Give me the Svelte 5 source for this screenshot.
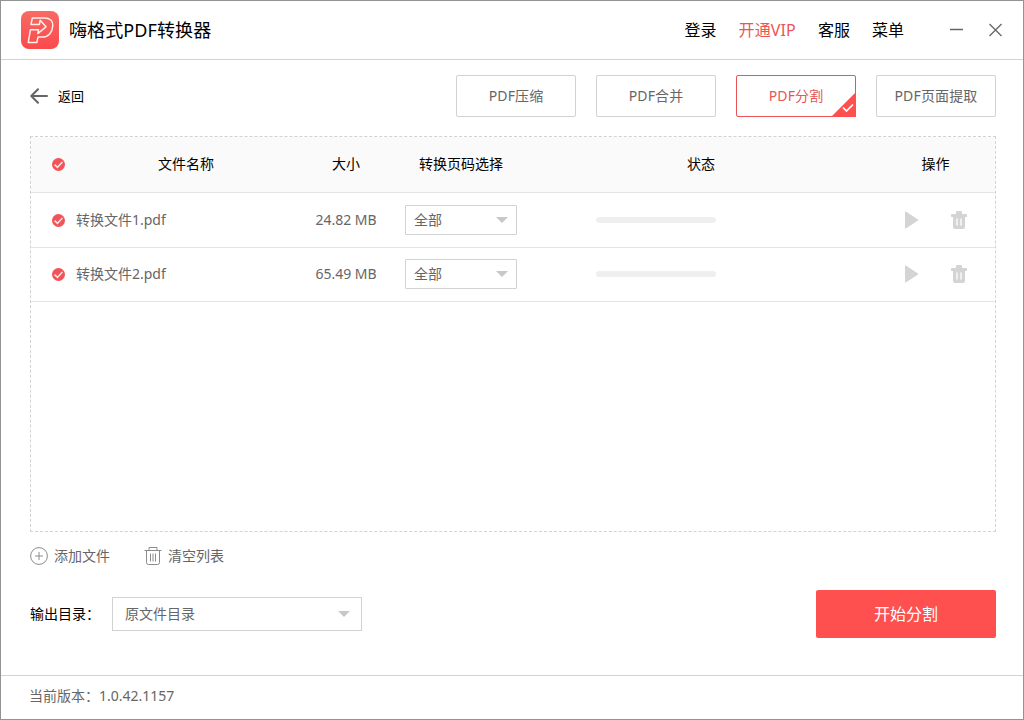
<script>
	const menu = [
		{ label: '登录' },
		{ label: '开通VIP', vip: true },
		{ label: '客服' },
		{ label: '菜单' }
	];
	const modes = ['PDF压缩', 'PDF合并', 'PDF分割', 'PDF页面提取'];
	let mode = $state('PDF分割');

	const columns = ['文件名称', '大小', '转换页码选择', '状态', '操作'];
	const files = [
		{ name: '转换文件1.pdf', size: '24.82 MB', pages: '全部', progress: 0 },
		{ name: '转换文件2.pdf', size: '65.49 MB', pages: '全部', progress: 0 }
	];
</script>

{#snippet check()}
	<svg class="check" width="13" height="13" viewBox="0 0 13 13">
		<circle cx="6.5" cy="6.5" r="6.5" fill="#f05458" />
		<path d="M2.6 6.6l2.900 2.700 4.900-5.300" fill="none" stroke="#fde3e3" stroke-width="1.600" />
	</svg>
{/snippet}

{#snippet caret()}
	<svg width="12" height="6" viewBox="0 0 12 6"><path d="M0 0h12L6 6z" fill="#c8c8c8" /></svg>
{/snippet}

<div class="window">
	<header>
		<svg class="logo" width="38" height="38" viewBox="0 0 38 38">
			<defs>
				<linearGradient id="logo-bg" x1="0" y1="0" x2="0" y2="1">
					<stop offset="0" stop-color="#f96a62" />
					<stop offset="1" stop-color="#fb4a4c" />
				</linearGradient>
			</defs>
			<rect width="38" height="38" rx="8" fill="url(#logo-bg)" />
			<path
				d="M11.300 6.900H23.500c5.500 0 8.700 3.100 8.300 7.900-.5 6.600-4.300 11.300-10.500 11.300H17l-1.200 5.500H7.200L9.400 18.800h8.100l-.7 3.800 8.200-6.800-5.800-6.600-.8 4.200H10z"
				fill="none"
				stroke="#fff"
				stroke-opacity=".9"
				stroke-width="1.500"
				stroke-linejoin="round"
			/>
		</svg>
		<h1>嗨格式PDF转换器</h1>
		<nav>
			{#each menu as item}
				<span class:vip={item.vip}>{item.label}</span>
			{/each}
		</nav>
		<svg class="controls" width="54" height="14" viewBox="0 0 54 14">
			<path d="M1 6.500h13M40.500 1l12 12M52.500 1l-12 12" fill="none" stroke="#666" stroke-width="1.300" />
		</svg>
	</header>

	<main>
		<div class="toolbar">
			<div class="back">
				<svg width="18" height="16" viewBox="0 0 18 16">
					<path
						d="M17 8H1.500M8 1.200L1.300 8 8 14.800"
						fill="none"
						stroke="#666"
						stroke-width="2"
						stroke-linecap="round"
						stroke-linejoin="round"
					/>
				</svg>
				<span>返回</span>
			</div>
			<div class="modes">
				{#each modes as m}
					<button class="mode" class:active={mode === m} onclick={() => (mode = m)}>
						{m}
						{#if mode === m}
							<svg class="corner" width="25" height="25" viewBox="0 0 25 25">
								<path d="M25 0v25H0z" fill="#ff5050" />
								<path d="M12 15.500l3.500 3.500 6.500-6.500" fill="none" stroke="#fff" stroke-width="1.700" />
							</svg>
						{/if}
					</button>
				{/each}
			</div>
		</div>

		<div class="table">
			<div class="row head">
				{@render check()}
				{#each columns as column}
					<span>{column}</span>
				{/each}
			</div>
			{#each files as file}
				<div class="row file">
					{@render check()}
					<span class="name">{file.name}</span>
					<span>{file.size}</span>
					<div class="select pages">{file.pages}{@render caret()}</div>
					<div class="progress"><div class="bar" style="width: {file.progress}%"></div></div>
					<div class="ops">
						<svg width="14" height="18" viewBox="0 0 14 18">
							<path d="M.5.8L13 9 .5 17.200z" fill="#d4d4d4" stroke="#d4d4d4" stroke-linejoin="round" />
						</svg>
						<svg width="16" height="18" viewBox="0 0 16 18">
							<path
								d="M5 1q0-1 1-1h4q1 0 1 1v2h4.200q.8 0 .8.800v1.400q0 .8-.8.800H14v10q0 2-2 2H4q-2 0-2-2V6H.8Q0 6 0 5.200V3.800Q0 3 .8 3H5z"
								fill="#d4d4d4"
							/>
							<path d="M6 7.500v7M10 7.500v7" stroke="#fff" stroke-width="1.300" />
						</svg>
					</div>
				</div>
			{/each}
		</div>

		<div class="actions">
			<div class="action add">
				<svg width="18" height="18" viewBox="0 0 18 18" fill="none" stroke="#8c8c8c">
					<circle cx="9" cy="9" r="8.400" />
					<path d="M9 5v8M5 9h8" />
				</svg>
				添加文件
			</div>
			<div class="action">
				<svg width="18" height="18" viewBox="0 0 18 18" fill="none" stroke="#8c8c8c">
					<path d="M.5 3.500h17M5 3V.5h8V3M2.500 3.500v12q0 2 2 2h9q2 0 2-2v-12M6.500 6.500v8M9 6.500v8M11.500 6.500v8" />
				</svg>
				清空列表
			</div>
		</div>

		<div class="output">
			<span class="label">输出目录：</span>
			<div class="select dir">原文件目录{@render caret()}</div>
			<button class="start">开始分割</button>
		</div>
	</main>

	<footer>当前版本：1.0.42.1157</footer>
</div>

<style>
	:global(body) {
		margin: 0;
	}

	.window {
		box-sizing: border-box;
		display: flex;
		flex-direction: column;
		width: 1024px;
		height: 720px;
		border: 1px solid #939393;
		background: #fff;
		color: #000;
		font-family: 'Noto Sans', 'Noto Sans CJK SC', sans-serif;
		font-size: 14px;
		line-height: 20px;
	}

	svg {
		display: block;
		flex: none;
	}

	button {
		padding: 0;
		font: inherit;
	}

	header {
		box-sizing: border-box;
		display: flex;
		align-items: center;
		height: 59px;
		padding: 0 20px;
		border-bottom: 1px solid #d2d2d2;
	}

	h1 {
		margin: 0 auto 0 10px;
		font-size: 18px;
		font-weight: 400;
		letter-spacing: 0.1px;
	}

	nav {
		display: flex;
		gap: 22px;
		margin-right: 45px;
		font-size: 16px;
	}

	.vip {
		color: #ee5455;
		letter-spacing: 0.15px;
	}

	main {
		flex: 1;
		padding: 15px 27px 0 29px;
	}

	.toolbar {
		display: flex;
		justify-content: space-between;
		align-items: center;
		height: 42px;
	}

	.back {
		display: flex;
		align-items: center;
		gap: 10px;
		font-size: 13px;
	}

	.modes {
		display: flex;
		gap: 20px;
	}

	.mode {
		position: relative;
		box-sizing: border-box;
		width: 120px;
		height: 42px;
		border: 1px solid #d2d2d2;
		border-radius: 2px;
		background: #fff;
		color: #666;
		letter-spacing: 0.15px;
	}

	.mode.active {
		border-color: #e85558;
		color: #e85558;
	}

	.corner {
		position: absolute;
		right: -1px;
		bottom: -1px;
	}

	.table {
		box-sizing: border-box;
		height: 396px;
		margin-top: 19px;
		border: 1px dashed #d2d2d2;
	}

	.row {
		box-sizing: border-box;
		display: grid;
		grid-template-columns: 45px 220px 100px 130px 350px 1fr;
		align-items: center;
		justify-items: center;
		height: 54px;
		padding-bottom: 1px;
		border-bottom: 1px solid #e4e4e4;
		color: #666;
	}

	.head {
		height: 56px;
		background: #fafafa;
		color: #000;
	}

	.head + .file {
		height: 55px;
		padding-top: 1px;
	}

	.check {
		justify-self: start;
		margin-left: 21px;
	}

	.name {
		justify-self: start;
	}

	.select {
		box-sizing: border-box;
		display: flex;
		align-items: center;
		justify-content: space-between;
		border: 1px solid #d2d2d2;
		color: #666;
	}

	.pages {
		width: 112px;
		height: 30px;
		padding: 0 8px;
		border-radius: 1px;
	}

	.progress {
		justify-self: start;
		width: 120px;
		height: 6px;
		margin-left: 70px;
		border-radius: 3px;
		background: #efefef;
		overflow: hidden;
	}

	.bar {
		height: 100%;
		background: #ff5050;
	}

	.ops {
		display: flex;
		justify-self: start;
		gap: 32px;
		margin-left: 29px;
	}

	.actions {
		display: flex;
		gap: 34px;
		margin-top: 14px;
		color: #666;
	}

	.action {
		display: flex;
		align-items: center;
		gap: 6px;
	}

	.output {
		display: flex;
		align-items: center;
		height: 48px;
		margin-top: 24px;
	}

	.label {
		width: 82px;
	}

	.dir {
		width: 250px;
		height: 34px;
		padding: 0 11px 0 12px;
	}

	.start {
		width: 180px;
		height: 48px;
		margin-left: auto;
		border: 0;
		border-radius: 2px;
		background: #ff5050;
		color: #fff;
		font-size: 16px;
	}

	footer {
		box-sizing: border-box;
		height: 44px;
		padding: 10px 28px;
		border-top: 1px solid #d2d2d2;
		color: #666;
	}
</style>
